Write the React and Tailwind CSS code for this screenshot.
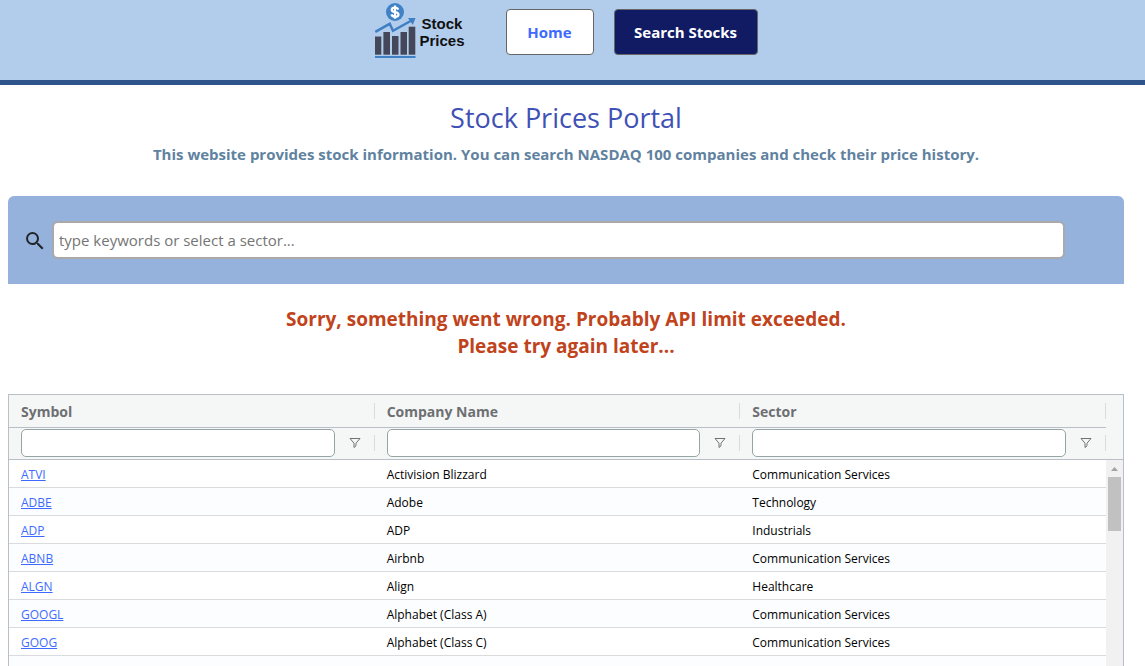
const columns = ["Symbol", "Company Name", "Sector"];

const rows = [
  ["ATVI", "Activision Blizzard", "Communication Services"],
  ["ADBE", "Adobe", "Technology"],
  ["ADP", "ADP", "Industrials"],
  ["ABNB", "Airbnb", "Communication Services"],
  ["ALGN", "Align", "Healthcare"],
  ["GOOGL", "Alphabet (Class A)", "Communication Services"],
  ["GOOG", "Alphabet (Class C)", "Communication Services"],
];

function Logo() {
  return (
    <div className="flex items-center gap-[3px]">
      <svg viewBox="0 0 42 56" className="h-14 w-[42px] shrink-0" aria-hidden="true">
        <g fill="#44475a">
          <rect x="1" y="33.500" width="6.300" height="18.200" />
          <rect x="9.400" y="29" width="6.600" height="22.700" />
          <rect x="18" y="33" width="6.500" height="18.700" />
          <rect x="26.500" y="29" width="6.500" height="22.700" />
          <rect x="34.700" y="23.700" width="6.600" height="28" />
        </g>
        <rect x="1" y="53" width="40.500" height="2" fill="#3f7fc4" />
        <path d="M1.300 28.800 L15.700 20.800 L19 27.800 L37.500 17.500" fill="none" stroke="#3f7fc4" strokeWidth="2.500" />
        <path d="M34 15 L41.500 15 L38.800 22 Z" fill="#3f7fc4" />
        <circle cx="21" cy="9" r="9" fill="#3f82c6" />
        <path
          d="M24.200 6.600 C23.700 5.200 22.500 4.600 21 4.600 C19 4.600 17.700 5.500 17.700 6.900 C17.700 9.900 24.500 8.300 24.500 11.400 C24.500 12.900 23.100 13.700 21.100 13.700 C19.100 13.700 17.800 12.900 17.400 11.400 M21 2.400 V15.700"
          fill="none"
          stroke="#fff"
          strokeWidth="2.200"
        />
      </svg>
      <div className="pt-0.5 font-['Liberation_Sans'] text-[15px]/[17px] font-bold text-[#111]">
        <div className="pl-0.5">Stock</div>
        <div>Prices</div>
      </div>
    </div>
  );
}

function FilterIcon() {
  return (
    <svg viewBox="0 0 12 12" className="size-3" fill="none" stroke="#6f7376" aria-hidden="true">
      <path d="M1 1.500 H11 L7 6.200 V8.800 L5 10.500 V6.200 L1 1.500 Z" />
    </svg>
  );
}

export default function App() {
  return (
    <div className="flex h-screen flex-col overflow-hidden bg-white font-['Open_Sans',sans-serif] text-[#212529]">
      <header className="shrink-0 border-b-5 border-[#2f538b] bg-[#b2cdeb] pr-[21px] pl-2">
        <nav className="flex h-20 items-start justify-center">
          <div className="mt-[3px] mr-[41px]">
            <Logo />
          </div>
          <div className="mt-[9px] flex gap-5 text-[15px] font-bold">
            <a href="#home" className="flex h-[46px] w-[88px] items-center justify-center rounded border border-[#666] bg-white text-[#3d6bff]">
              Home
            </a>
            <a href="#search" className="flex h-[46px] w-36 items-center justify-center rounded border border-[#666] bg-[#101b64] text-white">
              Search Stocks
            </a>
          </div>
        </nav>
      </header>

      <main className="flex min-h-0 flex-1 flex-col pr-[21px] pl-2">
        <h1 className="mt-4 text-center text-[27px]/[34px] font-medium text-[#3f51b5]">Stock Prices Portal</h1>
        <p className="mt-2 text-center text-[15px]/[23px] font-bold text-[#5f82a0]">
          This website provides stock information. You can search NASDAQ 100 companies and check their price history.
        </p>

        <form className="mt-[30px] flex h-[88px] shrink-0 items-center rounded-t-md bg-[#94b2dc] pr-[59px] pl-[15px]">
          <label htmlFor="keywords" className="mr-[5px] shrink-0 pt-0.5">
            <svg viewBox="0 0 24 24" className="size-6" fill="#212529" role="img" aria-label="Search">
              <path d="M15.500 14h-.79l-.28-.27A6.471 6.471 0 0 0 16 9.500 6.500 6.500 0 1 0 9.500 16c1.610 0 3.090-.59 4.230-1.570l.27.28v.79l5 4.990L20.490 19l-4.990-5zm-6 0C7.010 14 5 11.990 5 9.500S7.010 5 9.500 5 14 7.010 14 9.500 11.990 14 9.500 14z" />
            </svg>
          </label>
          <input
            id="keywords"
            type="text"
            placeholder="type keywords or select a sector..."
            className="h-[38px] min-w-0 flex-1 rounded-md border-2 border-[#a9a9a9] bg-white px-[5px] text-[15px] placeholder:text-[#757575]"
          />
        </form>

        <div role="alert" className="mt-[22px] text-center text-[19px]/[27px] font-bold text-[#c0431c]">
          <p>Sorry, something went wrong. Probably API limit exceeded.</p>
          <p>Please try again later...</p>
        </div>

        <div className="mt-[34px] flex min-h-0 flex-1 overflow-hidden border border-b-0 border-[#babfc7]">
          <div className="min-w-0 flex-1">
            <table className="w-full table-fixed border-separate border-spacing-0 text-left text-xs">
              <thead className="bg-[#f5f7f7]">
                <tr>
                  {columns.map((name) => (
                    <th key={name} scope="col" className="h-[33px] border-b border-[#babfc7] p-0">
                      <div className="flex h-4 items-center justify-between border-r border-[#d8dcdc] pt-0.5 pl-3 text-sm font-bold text-[#6d6f73]">
                        {name}
                      </div>
                    </th>
                  ))}
                </tr>
                <tr>
                  {columns.map((name) => (
                    <td key={name} className="h-8 border-b border-[#babfc7] p-0 pb-0.5">
                      <div className="flex items-center pl-3">
                        <input
                          type="text"
                          aria-label={`${name} filter`}
                          className="h-7 min-w-0 flex-1 rounded-[5px] border border-[#95a5a6] bg-white px-2 font-normal"
                        />
                        <button type="button" aria-label={`Filter ${name}`} className="mr-[13px] ml-[14px]">
                          <FilterIcon />
                        </button>
                        <span className="h-4 w-px bg-[#d8dcdc]" />
                      </div>
                    </td>
                  ))}
                </tr>
              </thead>
              <tbody>
                {rows.map(([symbol, company, sector]) => (
                  <tr key={symbol} className="even:bg-[#fcfdfe]">
                    <td className="h-7 border-b border-[#d9dcde] px-3 pt-0.5 pb-0">
                      <a href={`#${symbol}`} className="text-[#3d6bff] underline">
                        {symbol}
                      </a>
                    </td>
                    <td className="h-7 border-b border-[#d9dcde] px-3 pt-0.5 pb-0 text-black">{company}</td>
                    <td className="h-7 border-b border-[#d9dcde] px-3 pt-0.5 pb-0 text-black">{sector}</td>
                  </tr>
                ))}
                <tr className="even:bg-[#fcfdfe]">
                  <td colSpan={3} className="h-7" />
                </tr>
              </tbody>
            </table>
          </div>
          <div className="flex w-[17px] shrink-0 flex-col" aria-hidden="true">
            <div className="h-[65px] shrink-0 border-b border-[#babfc7] bg-[#f5f7f7]" />
            <div className="flex flex-1 flex-col items-center bg-[#f1f1f1]">
              <svg viewBox="0 0 17 17" className="size-[17px]" fill="#a3a3a3">
                <path d="M5 11 L8.500 7 L12 11 Z" />
              </svg>
              <div className="h-[54px] w-[13px] bg-[#c1c1c1]" />
            </div>
          </div>
        </div>
      </main>
    </div>
  );
}
